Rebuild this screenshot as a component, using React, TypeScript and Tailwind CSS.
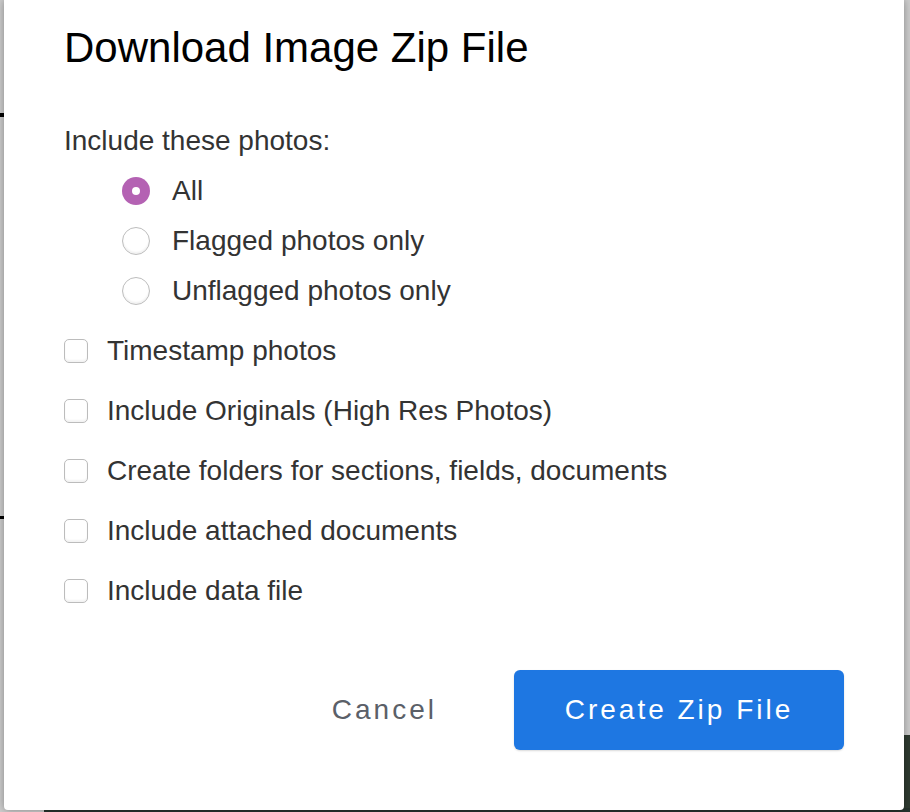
import React, { useState } from "react";

type PhotoFilter = "all" | "flagged" | "unflagged";

const photoOptions: { value: PhotoFilter; label: string }[] = [
  { value: "all", label: "All" },
  { value: "flagged", label: "Flagged photos only" },
  { value: "unflagged", label: "Unflagged photos only" },
];

const extraOptions = [
  "Timestamp photos",
  "Include Originals (High Res Photos)",
  "Create folders for sections, fields, documents",
  "Include attached documents",
  "Include data file",
];

const RadioDot: React.FC<{ checked: boolean }> = ({ checked }) =>
  checked ? (
    <span className="flex h-[28px] w-[28px] items-center justify-center rounded-full bg-[#b462b3]">
      <span className="h-[8px] w-[8px] rounded-full bg-white" />
    </span>
  ) : (
    <span className="h-[28px] w-[28px] rounded-full border border-[#bdbdbd] bg-white shadow-[inset_0_-2px_2px_rgba(0,0,0,0.06)]" />
  );

const App: React.FC = () => {
  const [filter, setFilter] = useState<PhotoFilter>("all");
  const [checked, setChecked] = useState<Record<string, boolean>>({});

  const toggle = (label: string) => {
    setChecked(prev => ({ ...prev, [label]: !prev[label] }));
  };

  return (
    <div
      className="relative h-[812px] w-[910px] overflow-hidden bg-[#cdcdcd] pl-[4px]"
      style={{ fontFamily: '"Liberation Sans", Arial, sans-serif' }}
    >
      {/* bits of the page behind the modal */}
      <div className="absolute left-0 top-[113px] h-[4px] w-[4px] bg-black" />
      <div className="absolute left-0 top-[516px] h-[3px] w-[4px] bg-black" />
      <div className="absolute bottom-0 right-0 top-[735px] w-[8px] bg-[#2f3b31]" />
      <div className="absolute bottom-0 left-[44px] right-0 h-[4px] bg-[#26332d]" />

      <div className="relative h-[810px] w-[900px] rounded-b-[4px] bg-white pl-[60px] pr-[60px] pt-[24px] shadow-[0_0_8px_rgba(0,0,0,0.35)]">
        <h2 className="text-[42px] leading-[48px] text-black">Download Image Zip File</h2>

        <div className="mt-[44px] flex h-[50px] items-center text-[28px] leading-[32px] text-[#333]">
          Include these photos:
        </div>

        <div className="pl-[58px]">
          {photoOptions.map(option => (
            <label
              key={option.value}
              className="flex h-[50px] cursor-pointer items-center gap-[22px] text-[28px] leading-[32px] text-[#333]"
              onClick={() => setFilter(option.value)}
            >
              <RadioDot checked={filter === option.value} />
              {option.label}
            </label>
          ))}
        </div>

        <div className="mt-[5px]">
          {extraOptions.map(label => (
            <label
              key={label}
              className="flex h-[60px] cursor-pointer items-center gap-[19px] text-[28px] leading-[32px] text-[#333]"
              onClick={() => toggle(label)}
            >
              <span
                className={`h-[24px] w-[24px] rounded-[5px] border ${
                  checked[label] ? "border-[#b462b3] bg-[#b462b3]" : "border-[#bcbcbc] bg-white"
                } shadow-[inset_0_-2px_2px_rgba(0,0,0,0.05)]`}
              />
              {label}
            </label>
          ))}
        </div>

        <div className="mt-[49px] flex items-center justify-end">
          <button className="mr-[77px] text-[28px] leading-[32px] tracking-[3px] text-[#5b6068]">Cancel</button>
          <button className="h-[80px] w-[330px] rounded-[6px] bg-[#1e77e2] text-[28px] leading-[32px] tracking-[3px] text-white shadow-[0_1px_2px_rgba(0,0,0,0.15)]">
            Create Zip File
          </button>
        </div>
      </div>
    </div>
  );
};

export default App;
